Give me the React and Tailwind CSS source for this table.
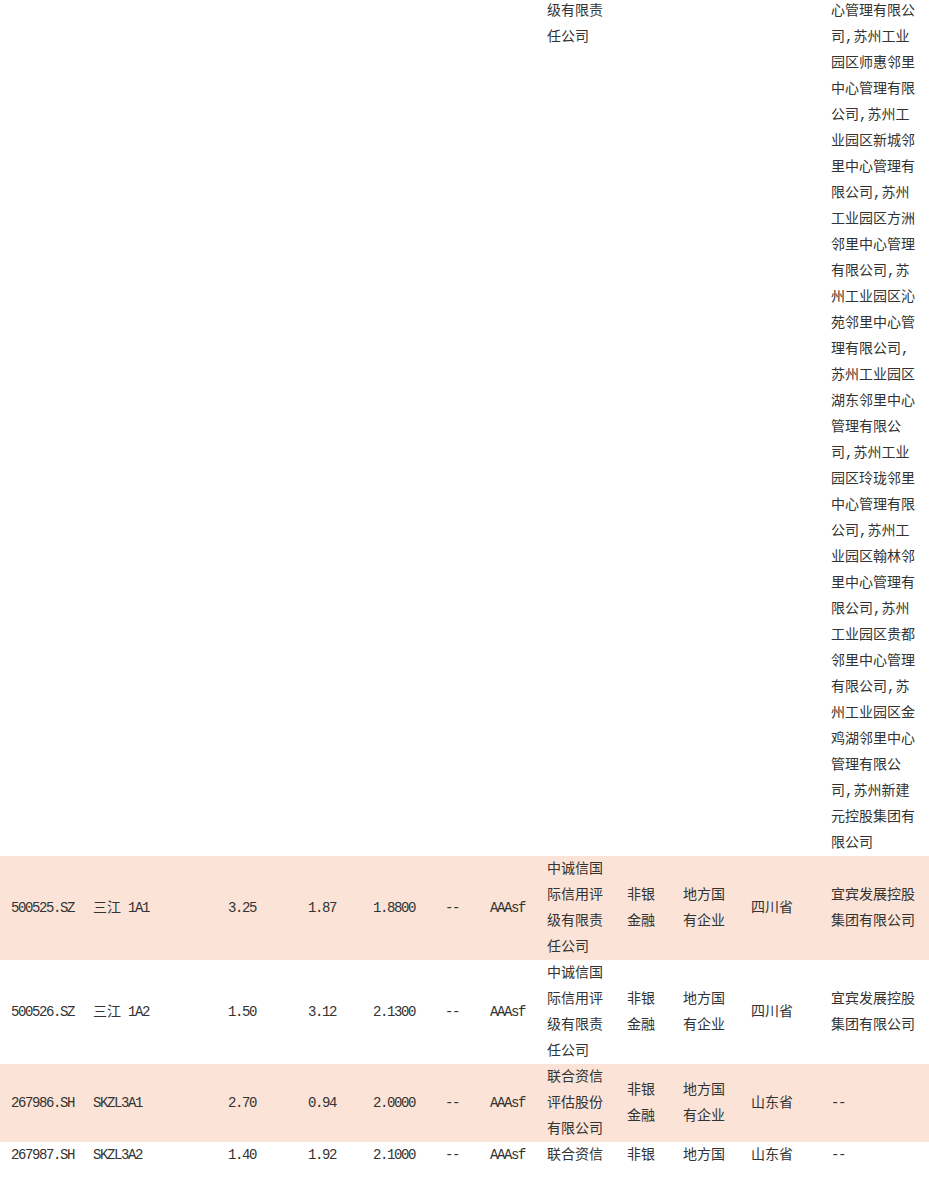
import React from "react";

const FONT = {
  fontFamily: '"Liberation Mono", "Noto Sans CJK SC", monospace',
};

const longText =
  "心管理有限公司,苏州工业园区师惠邻里中心管理有限公司,苏州工业园区新城邻里中心管理有限公司,苏州工业园区方洲邻里中心管理有限公司,苏州工业园区沁苑邻里中心管理有限公司,苏州工业园区湖东邻里中心管理有限公司,苏州工业园区玲珑邻里中心管理有限公司,苏州工业园区翰林邻里中心管理有限公司,苏州工业园区贵都邻里中心管理有限公司,苏州工业园区金鸡湖邻里中心管理有限公司,苏州新建元控股集团有限公司";

const rows = [
  {
    code: "500525.SZ",
    cn: "三江",
    en: " 1A1",
    a: "3.25",
    b: "1.87",
    c: "1.8800",
    d: "--",
    r: "AAAsf",
    agency: "中诚信国际信用评级有限责任公司",
    type: "非银金融",
    nature: "地方国有企业",
    prov: "四川省",
    holder: "宜宾发展控股集团有限公司",
    peach: true,
  },
  {
    code: "500526.SZ",
    cn: "三江",
    en: " 1A2",
    a: "1.50",
    b: "3.12",
    c: "2.1300",
    d: "--",
    r: "AAAsf",
    agency: "中诚信国际信用评级有限责任公司",
    type: "非银金融",
    nature: "地方国有企业",
    prov: "四川省",
    holder: "宜宾发展控股集团有限公司",
    peach: false,
  },
  {
    code: "267986.SH",
    cn: "",
    en: "SKZL3A1",
    a: "2.70",
    b: "0.94",
    c: "2.0000",
    d: "--",
    r: "AAAsf",
    agency: "联合资信评估股份有限公司",
    type: "非银金融",
    nature: "地方国有企业",
    prov: "山东省",
    holder: "--",
    peach: true,
  },
  {
    code: "267987.SH",
    cn: "",
    en: "SKZL3A2",
    a: "1.40",
    b: "1.92",
    c: "2.1000",
    d: "--",
    r: "AAAsf",
    agency: "联合资信",
    type: "非银",
    nature: "地方国",
    prov: "山东省",
    holder: "--",
    peach: false,
    top: true,
  },
];

function Lat({ children }) {
  return <span className="text-[14px] tracking-[-1.4px]">{children}</span>;
}

function Row({ row }) {
  const al = row.top ? "align-top" : "align-middle";
  const td = `${al} p-0 leading-[26px]`;
  return (
    <tr className={row.peach ? "bg-[#fbe4d7]" : "bg-white"}>
      <td className={`${td} pl-[11px]`}>
        <Lat>{row.code}</Lat>
      </td>
      <td className={`${td} pl-[8px]`}>
        {row.cn}
        <Lat>{row.en}</Lat>
      </td>
      <td className={`${td} pl-[8px]`}>
        <Lat>{row.a}</Lat>
      </td>
      <td className={`${td} pl-[8px]`}>
        <Lat>{row.b}</Lat>
      </td>
      <td className={`${td} pl-[8px]`}>
        <Lat>{row.c}</Lat>
      </td>
      <td className={`${td} pl-[8px]`}>
        <Lat>{row.d}</Lat>
      </td>
      <td className={`${td} pl-[8px]`}>
        <Lat>{row.r}</Lat>
      </td>
      <td className={`${td} pl-[8px] pr-[8px]`}>{row.agency}</td>
      <td className={`${td} pl-[8px] pr-[8px]`}>{row.type}</td>
      <td className={`${td} pl-[8px] pr-[8px]`}>{row.nature}</td>
      <td className={`${td} pl-[8px] pr-[8px]`}>{row.prov}</td>
      <td className={`${td} pl-[8px] pr-[12px]`}>
        {row.holder === "--" ? <Lat>--</Lat> : row.holder}
      </td>
    </tr>
  );
}

export default function App() {
  const td = "align-top p-0 leading-[26px]";
  return (
    <div className="h-[1181px] w-[929px] overflow-hidden bg-white">
      <table
        className="-mt-[2px] w-[929px] table-fixed border-collapse text-[14px] text-[#333333]"
        style={FONT}
      >
        <colgroup>
          <col className="w-[85px]" />
          <col className="w-[135px]" />
          <col className="w-[80px]" />
          <col className="w-[65px]" />
          <col className="w-[72px]" />
          <col className="w-[45px]" />
          <col className="w-[57px]" />
          <col className="w-[80px]" />
          <col className="w-[56px]" />
          <col className="w-[68px]" />
          <col className="w-[80px]" />
          <col className="w-[106px]" />
        </colgroup>
        <tbody>
          <tr className="bg-white">
            <td className={td}></td>
            <td className={td}></td>
            <td className={td}></td>
            <td className={td}></td>
            <td className={td}></td>
            <td className={td}></td>
            <td className={td}></td>
            <td className={`${td} pl-[8px] pr-[8px]`}>级有限责任公司</td>
            <td className={td}></td>
            <td className={td}></td>
            <td className={td}></td>
            <td className={`${td} pl-[8px] pr-[12px]`}>{longText}</td>
          </tr>
          {rows.map((r) => (
            <Row key={r.code} row={r} />
          ))}
        </tbody>
      </table>
    </div>
  );
}
